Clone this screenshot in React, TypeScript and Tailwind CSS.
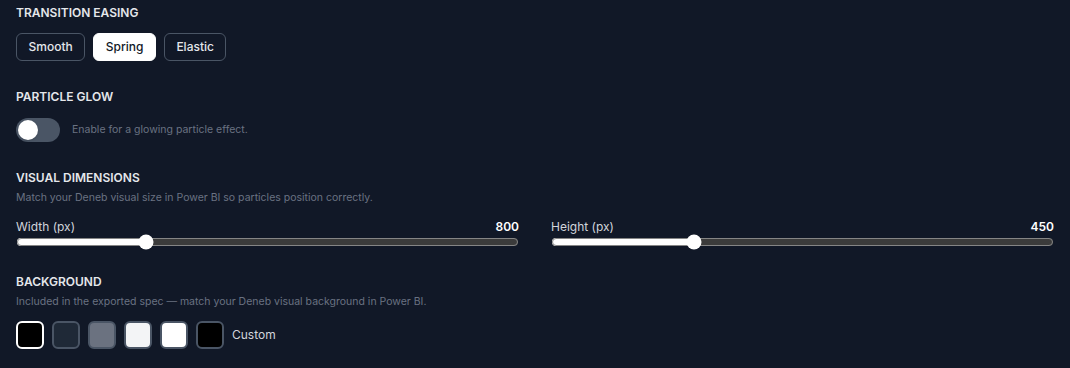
import React, { useState } from "react";

const easings = ["Smooth", "Spring", "Elastic"];

const swatches = [
  { color: "bg-black" },
  { color: "bg-[#1f2937]" },
  { color: "bg-[#6b7280]" },
  { color: "bg-[#f3f4f6]" },
  { color: "bg-white" },
];

const SectionTitle: React.FC<{ children: React.ReactNode }> = ({ children }) => (
  <h3 className="text-xs leading-4 font-semibold uppercase tracking-normal text-gray-200">
    {children}
  </h3>
);

const RangeField: React.FC<{
  label: string;
  value: number;
  min: number;
  max: number;
  onChange: (v: number) => void;
}> = ({ label, value, min, max, onChange }) => (
  <div className="flex-1 min-w-0">
    <div className="flex items-center justify-between h-4">
      <span className="text-xs text-gray-300">{label}</span>
      <span className="text-xs font-semibold text-white">{value}</span>
    </div>
    <input
      type="range"
      min={min}
      max={max}
      value={value}
      onChange={(e) => onChange(Number(e.target.value))}
      className="w-full h-2 mt-[3px] mb-0 mx-0 accent-white block"
    />
  </div>
);

export default function App() {
  const [easing, setEasing] = useState("Spring");
  const [glow, setGlow] = useState(false);
  const [width, setWidth] = useState(800);
  const [height, setHeight] = useState(450);
  const [bg, setBg] = useState(0);

  return (
    <div
      className="w-[1070px] h-[368px] bg-[#111827] px-4 pt-[5px] flex flex-col gap-7 overflow-hidden"
      style={{ fontFamily: "Inter, 'Liberation Sans', sans-serif" }}
    >
      {/* Easing */}
      <section>
        <SectionTitle>Transition Easing</SectionTitle>
        <div className="flex gap-2 mt-3">
          {easings.map((e) => (
            <button
              key={e}
              onClick={() => setEasing(e)}
              className={`h-7 px-[11.5px] rounded-md border text-xs font-medium ${
                easing === e
                  ? "bg-white border-white text-[#111827]"
                  : "bg-transparent border-gray-600 text-gray-200"
              }`}
            >
              {e}
            </button>
          ))}
        </div>
      </section>

      {/* Glow */}
      <section>
        <SectionTitle>Particle Glow</SectionTitle>
        <div className="flex items-center gap-3 mt-[13px]">
          <button
            onClick={() => setGlow(!glow)}
            className={`w-11 h-6 rounded-full p-0.5 flex transition-colors ${
              glow ? "bg-white/80 justify-end" : "bg-gray-600 justify-start"
            }`}
          >
            <span className="w-5 h-5 rounded-full bg-white shadow" />
          </button>
          <span className="text-[10.5px] text-gray-500">
            Enable for a glowing particle effect.
          </span>
        </div>
      </section>

      {/* Dimensions */}
      <section>
        <SectionTitle>Visual Dimensions</SectionTitle>
        <p className="text-[10.5px] leading-4 text-gray-500 mt-1">
          Match your Deneb visual size in Power BI so particles position correctly.
        </p>
        <div className="flex gap-8 mt-[13px]">
          <RangeField label="Width (px)" value={width} min={400} max={2000} onChange={setWidth} />
          <RangeField label="Height (px)" value={height} min={200} max={1100} onChange={setHeight} />
        </div>
      </section>

      {/* Background */}
      <section>
        <SectionTitle>Background</SectionTitle>
        <p className="text-[10.5px] leading-4 text-gray-500 mt-1">
          Included in the exported spec — match your Deneb visual background in Power BI.
        </p>
        <div className="flex items-center gap-2 mt-[11px]">
          {swatches.map((s, i) => (
            <button
              key={i}
              onClick={() => setBg(i)}
              className={`w-7 h-7 rounded-md border-2 ${s.color} ${
                bg === i ? "border-white" : "border-gray-600"
              }`}
            />
          ))}
          <button
            onClick={() => setBg(5)}
            className={`w-7 h-7 rounded-md border-2 bg-black ${
              bg === 5 ? "border-white" : "border-gray-600"
            }`}
          />
          <span className="text-xs text-gray-300">Custom</span>
        </div>
      </section>
    </div>
  );
}
